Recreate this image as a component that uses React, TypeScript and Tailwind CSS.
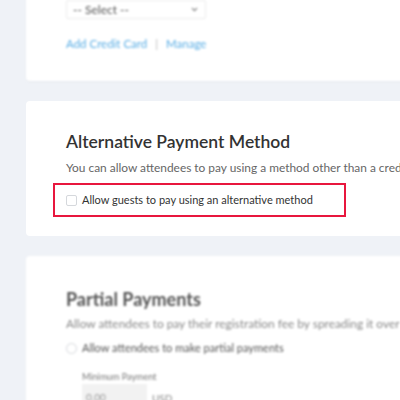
import { ChevronDown } from "lucide-react";

const font = { fontFamily: 'Lato, "Noto Sans", sans-serif' };

const App = () => {
  return (
    <div
      className="w-[400px] h-[400px] overflow-hidden bg-[#eff2f7] relative"
      style={font}
    >
      <div className="w-[440px] ml-[26px] flex flex-col gap-[20px] -mt-[20px]">
        {/* Card: credit card (out of focus) */}
        <div className="bg-white rounded-[4px] h-[101px] blur-[0.8px] shadow-[0_1px_2px_rgba(0,0,0,0.04)]">
          <div className="pl-[40px] pt-[20px]">
            <div className="w-[140px] h-[19px] border border-[#ececec] rounded-[2px] flex items-center justify-between px-[6px]">
              <span className="text-[12px] text-[#555]">-- Select --</span>
              <ChevronDown className="w-[9px] h-[9px] text-[#777]" strokeWidth={3} />
            </div>
            <div className="mt-[16px] flex items-center gap-[8px] text-[11.5px] text-[#5aaee5]">
              <span>Add Credit Card</span>
              <span className="text-[#bbb]">|</span>
              <span>Manage</span>
            </div>
          </div>
        </div>

        {/* Card: alternative payment */}
        <div className="bg-white rounded-[4px] h-[135px] pt-[30px] pl-[40px]">
          <h2 className="text-[17.5px] leading-[22px] font-semibold text-[#333]">
            Alternative Payment Method
          </h2>
          <p className="mt-[8px] text-[11.9px] leading-[14px] text-[#666] whitespace-nowrap">
            You can allow attendees to pay using a method other than a credit card.
          </p>
          <div className="mt-[8px] -ml-[13px] w-[293px] h-[34px] border-2 border-[#e8173e] flex items-center pl-[11px] gap-[5px]">
            <span className="w-[11px] h-[11px] border border-[#d5d8dc] rounded-[2px] bg-white shrink-0" />
            <span className="text-[11px] text-[#333] whitespace-nowrap">
              Allow guests to pay using an alternative method
            </span>
          </div>
        </div>

        {/* Card: partial payments (out of focus) */}
        <div className="bg-white rounded-[4px] h-[200px] pt-[32px] pl-[40px] blur-[1px]">
          <h2 className="text-[18px] leading-[22px] font-bold text-[#555]">
            Partial Payments
          </h2>
          <p className="mt-[7px] text-[11.9px] leading-[14px] text-[#888] whitespace-nowrap">
            Allow attendees to pay their registration fee by spreading it over multiple payments.
          </p>
          <div className="mt-[9px] flex items-center gap-[5px]">
            <span className="w-[11px] h-[11px] border border-[#d5d8dc] rounded-full bg-white" />
            <span className="text-[11px] text-[#555]">
              Allow attendees to make partial payments
            </span>
          </div>
          <div className="mt-[13px] pl-[16px]">
            <div className="text-[9px] text-[#777]">Minimum Payment</div>
            <div className="mt-[1px] flex items-end gap-[5px]">
              <div className="w-[65px] h-[22px] bg-[#f2f2f2] text-[10px] text-[#999] pl-[4px] pt-[6px]">
                0.00
              </div>
              <span className="text-[10px] text-[#888]">USD</span>
            </div>
          </div>
        </div>
      </div>
    </div>
  );
};

export default App;
